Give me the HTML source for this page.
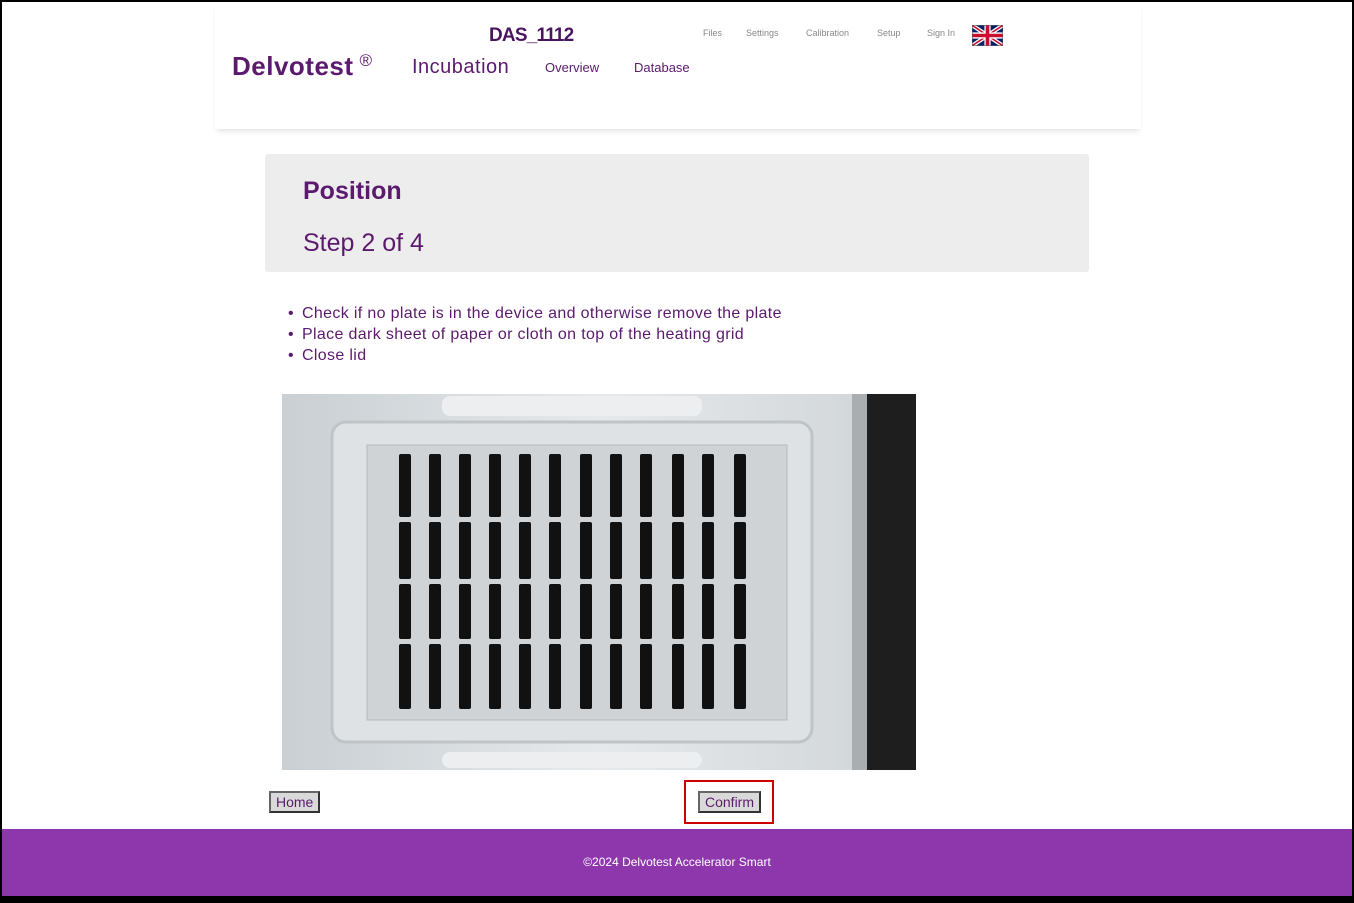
<!DOCTYPE html>
<html><head><meta charset="utf-8"><style>
*{margin:0;padding:0;box-sizing:border-box}
html,body{width:1354px;height:903px;overflow:hidden;background:#000}
.page{position:absolute;left:2px;top:2px;width:1350px;height:894px;background:#fff;font-family:"Liberation Sans",sans-serif;color:#5c1a6e}
.hdr{position:absolute;left:213px;top:0;width:926px;height:127px;box-shadow:0 4px 5px -2px rgba(0,0,0,0.12);background:#fff}
.t{position:absolute;white-space:nowrap}
.box{position:absolute;left:263px;top:152px;width:824px;height:118px;background:#ededed;border-radius:3px}
ul{position:absolute;left:286px;top:301px;list-style:none;font-size:16px;line-height:21px;color:#5c1a6e;letter-spacing:0.35px}
ul li::before{content:"•";margin-right:8px}
.btn{position:absolute;height:22px;border:2px solid #333;border-top-color:#666;border-left-color:#666;background:#d9d9d9;font-size:14px;line-height:18px;padding:0 5px;color:#5c1a6e}
.foot{position:absolute;left:0;top:827px;width:1350px;height:67px;background:#8e37ad;color:#fff;font-size:12px;text-align:center;line-height:67px}
</style></head><body><div class="page">
<div class="hdr"></div>
<div class="t" style="left:487px;top:23px;font-size:19px;font-weight:bold;color:#4a1560;letter-spacing:-0.8px">DAS_1112</div>
<div class="t" style="left:701px;top:26px;font-size:9px;color:#888">Files</div>
<div class="t" style="left:744px;top:26px;font-size:9px;color:#888">Settings</div>
<div class="t" style="left:804px;top:26px;font-size:9px;color:#888">Calibration</div>
<div class="t" style="left:875px;top:26px;font-size:9px;color:#888">Setup</div>
<div class="t" style="left:925px;top:26px;font-size:9px;color:#888">Sign In</div>
<svg style="position:absolute;left:970px;top:23px" width="31" height="21" viewBox="0 0 60 40"><rect width="60" height="40" fill="#012169"/><path d="M0 0L60 40M60 0L0 40" stroke="#fff" stroke-width="8"/><path d="M0 0L60 40M60 0L0 40" stroke="#C8102E" stroke-width="3"/><path d="M30 0V40M0 20H60" stroke="#fff" stroke-width="12"/><path d="M30 0V40M0 20H60" stroke="#C8102E" stroke-width="7"/><rect x="0.5" y="0.5" width="59" height="39" fill="none" stroke="#555"/></svg>
<div class="t" style="left:230px;top:49px;font-size:26px;font-weight:bold;color:#5c1a6e;letter-spacing:0.5px">Delvotest<sup style="font-size:17px;font-weight:normal;vertical-align:9px;margin-left:6px">®</sup></div>
<div class="t" style="left:410px;top:54px;font-size:20px;color:#5c1a6e;letter-spacing:0.5px">Incubation</div>
<div class="t" style="left:543px;top:58px;font-size:13px;color:#5c1a6e">Overview</div>
<div class="t" style="left:632px;top:58px;font-size:13px;color:#5c1a6e">Database</div>
<div class="box"></div>
<div class="t" style="left:301px;top:175px;font-size:25px;font-weight:bold">Position</div>
<div class="t" style="left:301px;top:227px;font-size:25px">Step 2 of 4</div>
<ul><li>Check if no plate is in the device and otherwise remove the plate</li><li>Place dark sheet of paper or cloth on top of the heating grid</li><li>Close lid</li></ul>
<svg style="position:absolute;left:280px;top:392px" width="634" height="376" viewBox="280 392 634 376">
<defs><linearGradient id="g" x1="0" x2="1"><stop offset="0" stop-color="#c9cfd3"/><stop offset="0.5" stop-color="#e6e9eb"/><stop offset="1" stop-color="#cfd4d7"/></linearGradient></defs>
<rect x="280" y="392" width="634" height="376" fill="url(#g)"/>
<rect x="330" y="420" width="480" height="320" rx="14" fill="#dfe2e4" stroke="#bfc4c7" stroke-width="3"/>
<rect x="440" y="394" width="260" height="20" rx="8" fill="#eceef0"/>
<rect x="440" y="750" width="260" height="16" rx="8" fill="#eceef0"/>
<rect x="365" y="443" width="420" height="275" fill="#cfd3d6" stroke="#b5babd"/>
<rect x="865" y="392" width="49" height="376" fill="#1e1e1e"/>
<rect x="850" y="392" width="15" height="376" fill="#a9aeb1"/>
<g fill="#111">
<g id="c">
<rect x="397" y="452" width="12" height="63" rx="2"/><rect x="397" y="520" width="12" height="57" rx="2"/><rect x="397" y="582" width="12" height="55" rx="2"/><rect x="397" y="642" width="12" height="65" rx="2"/>
</g>
<use href="#c" x="30"/><use href="#c" x="60"/><use href="#c" x="90"/><use href="#c" x="120"/><use href="#c" x="150"/><use href="#c" x="181"/><use href="#c" x="211"/><use href="#c" x="241"/><use href="#c" x="273"/><use href="#c" x="303"/><use href="#c" x="335"/>
</g>
</svg>
<div class="btn" style="left:267px;top:789px">Home</div>
<div style="position:absolute;left:682px;top:778px;width:90px;height:44px;border:2px solid #c00"></div>
<div class="btn" style="left:696px;top:789px">Confirm</div>
<div class="foot">©2024 Delvotest Accelerator Smart</div>
</div></body></html>
